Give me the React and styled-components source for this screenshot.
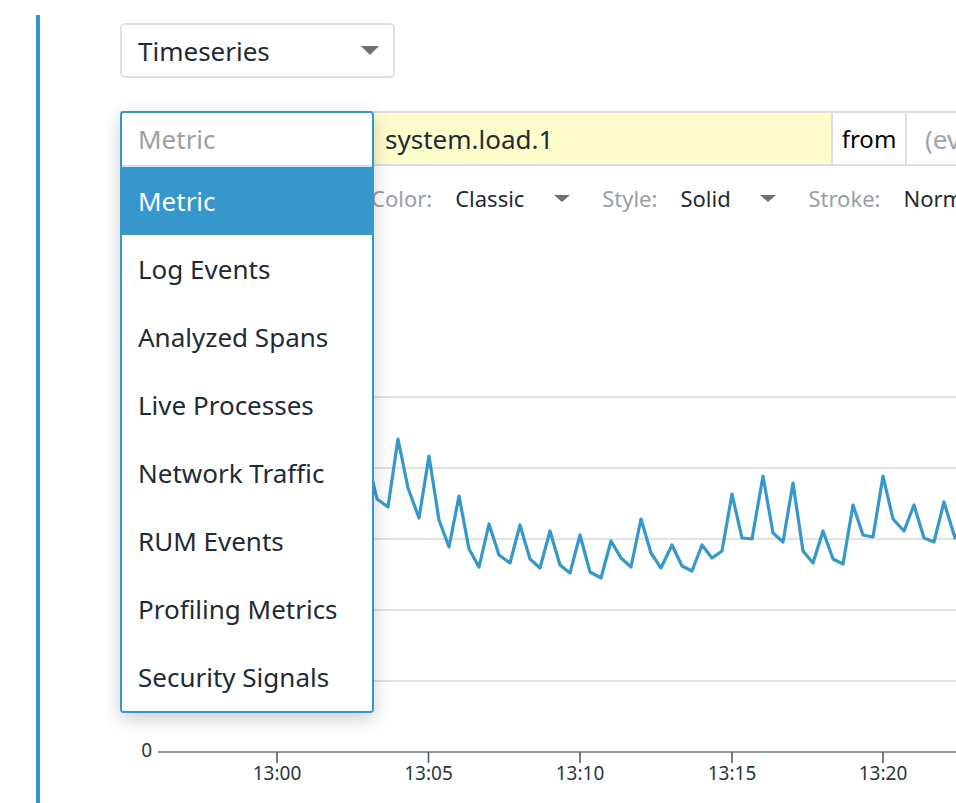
import React from "react";
import styled, { createGlobalStyle } from "styled-components";

const GlobalStyle = createGlobalStyle`
  html, body { margin: 0; padding: 0; background: #ffffff; }
  body { font-family: "Noto Sans", "Open Sans", sans-serif; color: #1e2b34; }
  * { box-sizing: border-box; }
`;

const ACCENT = "#3597cc";

const Page = styled.div`
  display: flex;
  width: 956px;
  height: 803px;
  overflow: hidden;
`;

const AccentBar = styled.div`
  flex: none;
  width: 4px;
  margin: 15px 0 0 36px;
  background: ${ACCENT};
`;

const Main = styled.div`
  flex: 1;
  min-width: 0;
  display: flex;
  flex-direction: column;
  padding: 23px 0 0 80px;
`;

const Caret = styled.span`
  flex: none;
  width: 0;
  height: 0;
  border-left: ${(p) => p.$w / 2}px solid transparent;
  border-right: ${(p) => p.$w / 2}px solid transparent;
  border-top: ${(p) => p.$h}px solid #6b7077;
`;

const TypeSelect = styled.div`
  width: 275px;
  height: 55px;
  border: 2px solid #dfe0e4;
  border-radius: 5px;
  display: flex;
  align-items: center;
  justify-content: space-between;
  padding: 0 14px 0 16px;
  font-size: 26px;
  color: #1e2b34;
`;

const QueryRow = styled.div`
  position: relative;
  margin-top: 33px;
  height: 55px;
  display: flex;
  border-top: 2px solid #dddde3;
  border-bottom: 2px solid #dddde3;
`;

const SourceCell = styled.div`
  flex: none;
  width: 253px;
`;

const MetricCell = styled.div`
  flex: none;
  width: 458px;
  background: #fffccc;
  display: flex;
  align-items: center;
  padding-left: 12px;
  font-size: 26px;
  color: #1e2b34;
`;

const FromCell = styled.div`
  flex: none;
  width: 76px;
  border-left: 2px solid #dddde3;
  border-right: 2px solid #dddde3;
  display: flex;
  align-items: center;
  justify-content: center;
  font-size: 24px;
  color: #000000;
`;

const FilterCell = styled.div`
  flex: 1;
  min-width: 0;
  overflow: hidden;
  white-space: nowrap;
  display: flex;
  align-items: center;
  padding-left: 18px;
  font-size: 26px;
  color: #9ea3a8;
`;

const Dropdown = styled.div`
  position: absolute;
  left: 0;
  top: -2px;
  width: 254px;
  z-index: 10;
  background: #ffffff;
  border: 2px solid ${ACCENT};
  border-radius: 4px;
  box-shadow: 0 6px 18px rgba(0, 0, 0, 0.2);
  overflow: hidden;
`;

const DropdownInput = styled.div`
  height: 54px;
  border-bottom: 2px solid #dedfe3;
  display: flex;
  align-items: center;
  padding-left: 16px;
  font-size: 26px;
  color: #9ba0a6;
`;

const Option = styled.div`
  height: 68px;
  display: flex;
  align-items: center;
  padding-left: 16px;
  font-size: 26px;
  white-space: nowrap;
  background: ${(p) => (p.$active ? ACCENT : "#ffffff")};
  color: ${(p) => (p.$active ? "#ffffff" : "#1e2b34")};
`;

const OptionsRow = styled.div`
  margin-top: 12px;
  height: 40px;
  display: flex;
  align-items: center;
  gap: 32px;
  padding-left: 251px;
  font-size: 22px;
  white-space: nowrap;
`;

const OptionGroup = styled.div`
  display: flex;
  align-items: center;
  gap: 23px;
  flex: none;
`;

const OptionLabel = styled.span`
  color: #9a9ea4;
`;

const OptionValue = styled.span`
  display: flex;
  align-items: center;
  justify-content: space-between;
  width: ${(p) => (p.$width ? `${p.$width}px` : "auto")};
  color: #1e2b34;
`;

const Chart = styled.svg`
  display: block;
  margin-top: 12px;
  flex: none;
  overflow: visible;
`;

const sources = [
  "Metric",
  "Log Events",
  "Analyzed Spans",
  "Live Processes",
  "Network Traffic",
  "RUM Events",
  "Profiling Metrics",
  "Security Signals",
];

const points = [
  [160, 490], [170, 470], [180, 500], [190, 480], [200, 510], [210, 470],
  [220, 495], [230, 505], [240, 460], [250, 500], [260, 485], [270, 515],
  [280, 470], [290, 498], [300, 488], [310, 512], [320, 466], [330, 502],
  [340, 490], [350, 508], [360, 472],
  [367, 457], [377, 499], [388, 507], [398, 439], [408, 488], [419, 518],
  [429, 456], [439, 520], [449, 547], [459, 496], [469, 549], [479, 567],
  [489, 524], [499, 555], [510, 563], [520, 525], [530, 559], [540, 568],
  [550, 531], [560, 565], [570, 573], [580, 535], [590, 572], [601, 578],
  [611, 541], [621, 558], [631, 567], [641, 519], [651, 553], [661, 568],
  [672, 545], [682, 566], [692, 571], [702, 545], [712, 558], [722, 551],
  [732, 494], [742, 538], [752, 539], [763, 476], [773, 533], [783, 542],
  [793, 483], [803, 551], [813, 563], [823, 531], [833, 559], [843, 564],
  [853, 505], [863, 535], [873, 537], [883, 476], [893, 519], [904, 531],
  [914, 505], [924, 538], [934, 542], [944, 502], [955, 538], [965, 520],
];

const OX = 120;
const OY = 230;
const gridYs = [397, 468, 539, 610, 681];
const ticks = [
  [277, "13:00"],
  [428.5, "13:05"],
  [580, "13:10"],
  [732, "13:15"],
  [883, "13:20"],
];

function TimeseriesChart() {
  const poly = points.map(([x, y]) => `${x - OX},${y - OY}`).join(" ");
  return (
    <Chart width="836" height="573" viewBox="0 0 836 573">
      {gridYs.map((y) => (
        <line key={y} x1={38} x2={836} y1={y - OY} y2={y - OY} stroke="#e2e2e4" strokeWidth="2" />
      ))}
      <line x1={38} x2={836} y1={752 - OY} y2={752 - OY} stroke="#6f7378" strokeWidth="1.5" />
      <text x={32} y={757 - OY} textAnchor="end" fontFamily="Noto Sans, sans-serif" fontSize="19" fill="#2a3740">
        0
      </text>
      {ticks.map(([x, label]) => (
        <g key={label}>
          <line x1={x - OX} x2={x - OX} y1={752 - OY} y2={763 - OY} stroke="#4a5259" strokeWidth="1.5" />
          <text x={x - OX} y={780 - OY} textAnchor="middle" fontFamily="Noto Sans, sans-serif" fontSize="19" fill="#2a3740">
            {label}
          </text>
        </g>
      ))}
      <polyline points={poly} fill="none" stroke="#3498cc" strokeWidth="3.2" strokeLinejoin="round" strokeLinecap="round" />
    </Chart>
  );
}

export default function App() {
  return (
    <>
      <GlobalStyle />
      <Page>
        <AccentBar />
        <Main>
          <TypeSelect>
            <span>Timeseries</span>
            <Caret $w={18} $h={9} />
          </TypeSelect>
          <QueryRow>
            <SourceCell />
            <MetricCell>system.load.1</MetricCell>
            <FromCell>from</FromCell>
            <FilterCell>(everywhere)</FilterCell>
            <Dropdown>
              <DropdownInput>Metric</DropdownInput>
              {sources.map((s, i) => (
                <Option key={s} $active={i === 0}>
                  {s}
                </Option>
              ))}
            </Dropdown>
          </QueryRow>
          <OptionsRow>
            <OptionGroup>
              <OptionLabel>Color:</OptionLabel>
              <OptionValue $width={115}>
                Classic
                <Caret $w={16} $h={7} />
              </OptionValue>
            </OptionGroup>
            <OptionGroup>
              <OptionLabel>Style:</OptionLabel>
              <OptionValue $width={96}>
                Solid
                <Caret $w={16} $h={7} />
              </OptionValue>
            </OptionGroup>
            <OptionGroup>
              <OptionLabel>Stroke:</OptionLabel>
              <OptionValue>Normal</OptionValue>
            </OptionGroup>
          </OptionsRow>
          <TimeseriesChart />
        </Main>
      </Page>
    </>
  );
}
